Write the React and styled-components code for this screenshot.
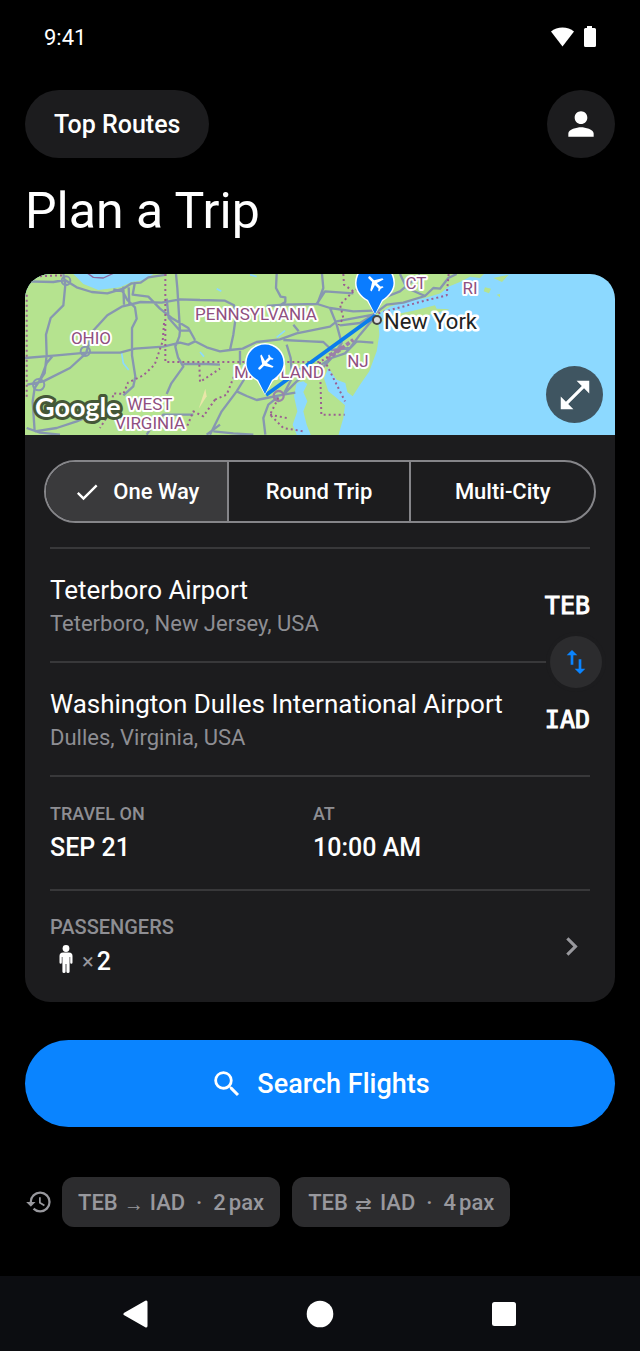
import React, { useState } from 'react';
import styled, { createGlobalStyle } from 'styled-components';
import {
	MdCheck,
	MdChevronRight,
	MdHistory,
	MdOpenInFull,
	MdPerson,
	MdSearch,
	MdSwapVert,
} from 'react-icons/md';

const tripTypes = ['One Way', 'Round Trip', 'Multi-City'];

const recents = [
	{ from: 'TEB', arrow: '→', to: 'IAD', pax: 2 },
	{ from: 'TEB', arrow: '⇄', to: 'IAD', pax: 4 },
];

const roads = [
	'M15 40 L100 42 L135 36 L170 58 L215 72 L262 76 L310 62 L335 46 L362 44 L385 28 L440 20',
	'M130 18 L136 50 L130 112 L92 150 L78 200 L80 262 L74 315 L44 360 L38 400 L44 490',
	'M15 270 L110 262 L200 254 L300 254 L345 242 L430 236 L480 224 L505 230 L525 220 L560 238 L600 250 L630 246 L640 200 L647 150 L642 112 L615 98 L540 96',
	'M630 246 L668 242 L710 222 L780 214 L830 196 L930 176 L950 160 L1060 140',
	'M22 350 L70 340 L150 300 L198 256 L218 190 L262 142 L305 116 L362 102 L425 104 L480 94 L540 96',
	'M280 64 L308 70 L322 96 L345 118 L350 152 L336 180 L336 262 L346 326 L340 355 L310 382',
	'M310 56 L312 110 M326 58 L328 108 M345 42 L338 80 L385 86 L420 122 L455 150 L505 180 L525 216',
	'M440 92 L446 150 L480 188 L478 205 L466 236 L474 268 L490 296 L454 346 L440 378',
	'M468 18 L472 60 L480 188 L508 188',
	'M490 288 L560 288 L600 290 M660 248 L660 290 M800 230 L812 270 L816 330 L790 380',
	'M55 345 L66 322 L80 285 L98 264',
	'M44 490 L110 480 L170 460 L240 430',
	'M20 480 L60 494 L120 500 M380 500 L400 470 L430 440 L520 440 M560 500 L600 470',
	'M570 500 L605 430 L650 370 L680 384 L710 396 L740 390 L790 380 L826 374',
	'M650 370 L675 330 M580 490 L640 496 L700 500',
	'M736 500 L730 450 L745 410 L775 386',
	'M770 18 L768 60 L782 86 L796 88 L796 102 L780 112 M740 114 L790 110 M820 170 L836 190',
	'M906 18 L910 60 L892 108 L930 120 L1000 130 L1060 128',
	'M790 110 L890 108 L915 70 L1000 76',
	'M790 216 L870 220 L910 222 L935 246 L990 240 L1020 200 L1062 150',
	'M940 262 L965 225 L950 170 L930 120',
	'M900 308 L935 270 L975 256 L1010 220 L1060 224',
	'M960 172 L1020 165 L1060 140 L1100 110 L1150 104 L1215 84 L1240 60 L1260 62 L1285 30 L1310 18',
	'M1060 140 L1090 90 L1140 70 L1200 20 M1140 18 L1160 60 L1215 84',
	'M790 380 L830 340 L880 305 L935 270',
];

const borders = [
	'M20 80 L20 390 M15 26 L130 22',
	'M436 18 L436 282 L900 282 L930 262',
	'M432 165 L428 220 L404 290 L370 322 L324 344 L310 378 L280 376 L272 430 L240 480',
	'M538 290 L540 342 L600 302 M585 395 L550 445 L520 430 L495 490',
	'M585 395 L620 380 L640 330 L655 290',
	'M900 282 L904 440 L974 440 M920 290 L940 330 L975 400',
	'M775 390 L750 440 L790 480 L850 490 M750 440 L800 450',
	'M1000 70 L960 110 L970 150 L956 172 M970 18 L972 50 L1000 70 L1050 40',
	'M1075 136 L1140 118 L1215 98 L1280 82 L1286 18',
];

const Pin = ({ x, y, angle }) => (
	<g transform={`translate(${x} ${y})`}>
		<path
			d="M0 0 L-8 -14 C-15 -18 -20 -24 -20 -32 A20 20 0 1 1 20 -32 C20 -24 14 -18 8 -14 Z"
			fill="#fff"
		/>
		<path
			d="M0 -1 L-7 -15 C-14 -19 -18.500 -25 -18.500 -32 A18.500 18.500 0 1 1 18.500 -32 C18.500 -25 13 -19 7 -15 Z"
			fill="#0a7cff"
		/>
		<path
			transform={`translate(0 -32) rotate(${angle}) scale(.9) translate(-11.5 -12)`}
			d="M21 16v-2l-8-5V3.500c0-.83-.67-1.500-1.500-1.500S10 2.670 10 3.500V9l-8 5v2l8-2.500V19l-2 1.500V22l3.500-1 3.500 1v-1.500L13 19v-5.500l8 2.500z"
			fill="#fff"
		/>
	</g>
);

const RouteMap = () => (
	<MapDrawing viewBox="0 0 590 161" preserveAspectRatio="xMidYMid slice" role="img" aria-label="Route map">
		<rect width="590" height="161" fill="#8cd9ff" />
		<g transform="translate(-5 -6) scale(.33333)" fill="none" strokeLinejoin="round">
			<path
				fill="#b5e38f"
				d="M0 0 H1410 L1380 30 L1350 26 L1320 42 L1285 56 L1262 76 L1215 90 L1160 100 L1110 116 L1080 134 L1074 150 L1078 200 L1070 250 L1048 310 L1020 350 L998 385 L982 372 L976 345 L950 335 L925 300 L912 330 L925 370 L950 390 L975 412 L970 450 L950 520 H880 L860 470 L850 430 L862 400 L850 372 L862 348 L850 340 L830 345 L822 385 L832 430 L818 470 L838 520 H0 Z"
			/>
			<path fill="#b5e38f" d="M1080 160 L1120 140 L1180 128 L1245 112 L1250 122 L1290 124 L1200 148 L1110 160 Z" />
			<path fill="#b5e38f" d="M1395 58 l18 4 l-6 14 l-16 -6z M1430 80 l10 -2 v10z M1420 30 l46 -10 l-20 22z" />
			<path fill="#8cd9ff" d="M160 18 L190 48 L235 66 L300 58 L335 42 L375 36 L400 18 Z" />
			<path stroke="#8cd9ff" strokeWidth="5" d="M304 250 L310 286 L326 306 M770 208 L795 188 M540 252 l12 14 M590 62 l14 8 M690 20 l20 6" />
			<path fill="#e9e6a8" d="M556 362 L560 385 L536 422 Z" />
			<path stroke="#8797b0" strokeWidth="7" d={roads.join(' ')} />
			<circle cx="138" cy="38" r="13" stroke="#8797b0" strokeWidth="6" />
			<circle cx="196" cy="250" r="14" stroke="#8797b0" strokeWidth="6" />
			<circle cx="56" cy="350" r="17" stroke="#8797b0" strokeWidth="6" />
			<circle cx="776" cy="384" r="15" stroke="#9a84a8" strokeWidth="7" />
			<path stroke="#9c7fa8" strokeWidth="11" strokeDasharray="12 6" d="M922 275 L960 245 L1000 215 M928 262 L970 236" />
			<path stroke="#9b5f92" strokeWidth="6" strokeDasharray="6 9" d={borders.join(' ')} />
			<path stroke="#8b6aa0" strokeWidth="4" d="M200 14 L220 28 L250 30 L280 16" />
		</g>
		<path d="M241 121 L351 41" stroke="#0a7cec" strokeWidth="4" />
		<StateLabel x="66" y="70">OHIO</StateLabel>
		<StateLabel x="231" y="46">PENNSYLVANIA</StateLabel>
		<StateLabel x="125" y="136">WEST</StateLabel>
		<StateLabel x="125" y="155">VIRGINIA</StateLabel>
		<StateLabel x="254" y="104">MARYLAND</StateLabel>
		<StateLabel x="333" y="93">NJ</StateLabel>
		<StateLabel x="391" y="15">CT</StateLabel>
		<StateLabel x="445" y="20">RI</StateLabel>
		<circle cx="352" cy="46" r="4" fill="#ddd" stroke="#444" strokeWidth="2" />
		<CityLabel x="359" y="55">New York</CityLabel>
		<Pin x={240} y={121} angle={-135} />
		<Pin x={350} y={41} angle={-45} />
		<MapLogo x="10" y="143">Google</MapLogo>
	</MapDrawing>
);

const App = () => {
	const [tripType, setTripType] = useState('One Way');

	return (
		<Screen>
			<GlobalStyle />
			<StatusBar>
				<span>9:41</span>
				<StatusIcons viewBox="0 0 46 22" aria-hidden="true">
					<path d="M1 5.500 C7 0 18 0 24 5.500 L12.500 20.500 Z" />
					<path d="M37 0 h5 v2 h2.500 q1.500 0 1.500 1.500 v16 q0 1.500 -1.500 1.500 h-9 q-1.500 0 -1.500 -1.500 v-16 q0 -1.500 1.500 -1.500 h1.500z" />
				</StatusIcons>
			</StatusBar>
			<Content>
				<Header>
					<RoutesButton>Top Routes</RoutesButton>
					<ProfileButton aria-label="Profile">
						<MdPerson size={38} />
					</ProfileButton>
				</Header>
				<Title>Plan a Trip</Title>
				<Card>
					<MapBox>
						<RouteMap />
						<ExpandButton aria-label="Expand map">
							<MdOpenInFull size={38} />
						</ExpandButton>
					</MapBox>
					<Segments>
						{tripTypes.map((type) => (
							<Segment
								key={type}
								$active={type === tripType}
								aria-pressed={type === tripType}
								onClick={() => setTripType(type)}
							>
								{type === tripType && <MdCheck size={28} />}
								{type}
							</Segment>
						))}
					</Segments>
					<Rows>
						<Row>
							<Airport>
								<AirportName>Teterboro Airport</AirportName>
								<AirportPlace>Teterboro, New Jersey, USA</AirportPlace>
							</Airport>
							<Code>TEB</Code>
						</Row>
						<Row>
							<Airport>
								<AirportName>Washington Dulles International Airport</AirportName>
								<AirportPlace>Dulles, Virginia, USA</AirportPlace>
							</Airport>
							<Code>IAD</Code>
							<SwapButton aria-label="Swap airports">
								<MdSwapVert size={32} />
							</SwapButton>
						</Row>
						<Row>
							<DateGrid>
								<Field>
									<Label>TRAVEL ON</Label>
									<Value>SEP 21</Value>
								</Field>
								<Field>
									<Label>AT</Label>
									<Value>10:00 AM</Value>
								</Field>
							</DateGrid>
						</Row>
						<Row>
							<PassengerButton>
								<Field>
									<Label $large>PASSENGERS</Label>
									<Value>
										<Figure viewBox="0 0 14 28" aria-hidden="true">
											<circle cx="7" cy="3.500" r="3.400" />
											<path d="M4 7.500 H10 Q13.500 7.500 13.500 11 V17.500 Q13.500 18.800 12.300 18.800 Q11.200 18.800 11.200 17.500 V12 H10.600 V26.500 Q10.600 28 9 28 Q7.400 28 7.400 26.500 V19 H6.600 V26.500 Q6.600 28 5 28 Q3.400 28 3.400 26.500 V12 H2.800 V17.500 Q2.800 18.800 1.700 18.800 Q.5 18.800 .5 17.500 V11 Q.5 7.500 4 7.500Z" />
										</Figure>
										<Times>×</Times>2
									</Value>
								</Field>
								<MdChevronRight size={37} />
							</PassengerButton>
						</Row>
					</Rows>
				</Card>
				<SearchButton>
					<MdSearch size={34} />
					Search Flights
				</SearchButton>
				<Recents>
					<MdHistory size={28} />
					<Chips>
						{recents.map(({ from, arrow, to, pax }) => (
							<Chip key={pax}>
								<span>{from}</span>
								<Arrow>{arrow}</Arrow>
								<span>{to}</span>
								<Dot>·</Dot>
								<Pax>
									<span>{pax}</span>
									<span>pax</span>
								</Pax>
							</Chip>
						))}
					</Chips>
				</Recents>
			</Content>
			<NavBar>
				<NavButton aria-label="Back">
					<svg width="28" height="28" viewBox="0 0 28 28">
						<path d="M24 2 V26 L3 14 Z" fill="#fff" stroke="#fff" strokeWidth="3" strokeLinejoin="round" />
					</svg>
				</NavButton>
				<NavButton aria-label="Home">
					<svg width="28" height="28" viewBox="0 0 28 28">
						<circle cx="14" cy="14" r="13.300" fill="#fff" />
					</svg>
				</NavButton>
				<NavButton aria-label="Overview">
					<svg width="28" height="28" viewBox="0 0 28 28">
						<rect x="2" y="2" width="24" height="24" rx="2.500" fill="#fff" />
					</svg>
				</NavButton>
			</NavBar>
		</Screen>
	);
};

export default App;

const GlobalStyle = createGlobalStyle`
	* {
		box-sizing: border-box;
	}
	body {
		margin: 0;
		background: #000;
		color: #fff;
		font-family: Roboto, "Liberation Sans", sans-serif;
	}
	button {
		margin: 0;
		padding: 0;
		border: 0;
		background: none;
		color: inherit;
		font: inherit;
		cursor: pointer;
	}
	svg {
		flex: none;
	}
`;
const Screen = styled.div`
	min-height: 100vh;
	display: flex;
	flex-direction: column;
`;
const StatusBar = styled.div`
	height: 74px;
	padding: 0 44px;
	display: flex;
	align-items: center;
	justify-content: space-between;
	font-size: 22px;
`;
const StatusIcons = styled.svg`
	width: 46px;
	height: 22px;
	fill: #fff;
`;
const Content = styled.main`
	flex: 1;
	padding: 16px 25px 49px;
`;
const Header = styled.header`
	display: flex;
	justify-content: space-between;
`;
const RoutesButton = styled.button`
	height: 68px;
	padding: 0 29px;
	border-radius: 34px;
	background: #1c1c1e;
	font-size: 25px;
	font-weight: 500;
`;
const ProfileButton = styled.button`
	width: 68px;
	height: 68px;
	border-radius: 50%;
	background: #1c1c1e;
	display: flex;
	align-items: center;
	justify-content: center;
`;
const Title = styled.h1`
	margin: 23px 0 33px;
	font-size: 50px;
	font-weight: 400;
	line-height: 60px;
`;
const Card = styled.section`
	border-radius: 25px;
	background: #1c1c1e;
	overflow: hidden;
`;
const MapBox = styled.div`
	position: relative;
	height: 161px;
`;
const MapDrawing = styled.svg`
	display: block;
	width: 100%;
	height: 100%;
`;
const StateLabel = styled.text`
	font-size: 17px;
	text-anchor: middle;
	fill: #8f4f80;
	stroke: #fff;
	stroke-width: 4px;
	stroke-linejoin: round;
	paint-order: stroke;
`;
const CityLabel = styled.text`
	font-size: 22px;
	fill: #222;
	stroke: #fff;
	stroke-width: 5px;
	stroke-linejoin: round;
	paint-order: stroke;
`;
const MapLogo = styled.text`
	font-family: Lato, Roboto, sans-serif;
	font-size: 27px;
	font-weight: 700;
	fill: #fff;
	stroke: #455738;
	stroke-width: 6px;
	stroke-linejoin: round;
	paint-order: stroke;
`;
const ExpandButton = styled.button`
	position: absolute;
	right: 12px;
	bottom: 12px;
	width: 57px;
	height: 57px;
	border-radius: 50%;
	background: #3f5561;
	display: flex;
	align-items: center;
	justify-content: center;
`;
const Segments = styled.div`
	height: 63px;
	margin: 25px 19px 24px;
	border: 2px solid #858589;
	border-radius: 32px;
	display: grid;
	grid-template-columns: repeat(3, 1fr);
	overflow: hidden;
`;
const Segment = styled.button`
	display: flex;
	align-items: center;
	justify-content: center;
	gap: 12px;
	background: ${({ $active }) => ($active ? '#3a3a3c' : 'transparent')};
	font-size: 22px;
	font-weight: 500;
	&:not(:last-child) {
		border-right: 2px solid #858589;
	}
`;
const Rows = styled.div`
	padding: 0 25px;
`;
const Row = styled.div`
	position: relative;
	min-height: 114px;
	border-top: 2px solid #38383a;
	display: flex;
	align-items: center;
	justify-content: space-between;
	&:last-child {
		min-height: 113px;
	}
`;
const Airport = styled.div`
	min-width: 0;
	padding-top: 2px;
	display: flex;
	flex-direction: column;
	gap: 4px;
	white-space: nowrap;
`;
const AirportName = styled.div`
	font-size: 26px;
	line-height: 32px;
`;
const AirportPlace = styled.div`
	color: #8e8e93;
	font-size: 22px;
	line-height: 28px;
`;
const Code = styled.div`
	font-family: "DejaVu Sans Mono", "Liberation Mono", monospace;
	font-size: 25px;
	-webkit-text-stroke: 1px #fff;
`;
const SwapButton = styled.button`
	position: absolute;
	top: -27px;
	right: -12px;
	width: 52px;
	height: 52px;
	border-radius: 50%;
	background: #2c2c2e;
	box-shadow: 0 0 0 4px #1c1c1e;
	color: #0a84ff;
	display: flex;
	align-items: center;
	justify-content: center;
`;
const DateGrid = styled.div`
	flex: 1;
	padding-right: 14px;
	display: grid;
	grid-template-columns: 1fr 1fr;
`;
const Field = styled.div`
	display: flex;
	flex-direction: column;
	gap: 6px;
`;
const Label = styled.div`
	color: #8e8e93;
	font-size: ${({ $large }) => ($large ? '20px' : '18px')};
	font-weight: 500;
	line-height: 24px;
`;
const Value = styled.div`
	display: flex;
	align-items: center;
	font-size: 25px;
	font-weight: 500;
	line-height: 32px;
`;
const PassengerButton = styled.button`
	flex: 1;
	display: flex;
	align-items: center;
	justify-content: space-between;
	text-align: left;
	> svg {
		color: #98989d;
	}
`;
const Figure = styled.svg`
	width: 14px;
	height: 28px;
	margin: 0 9px 6px;
	fill: #fff;
`;
const Times = styled.span`
	margin-right: 3px;
	color: #98989d;
	font-size: 22px;
	font-weight: 400;
`;
const SearchButton = styled.button`
	width: 100%;
	height: 87px;
	margin: 38px 0 50px;
	border-radius: 44px;
	background: #0a84ff;
	display: flex;
	align-items: center;
	justify-content: center;
	gap: 13px;
	font-size: 27px;
	font-weight: 500;
`;
const Recents = styled.div`
	display: flex;
	align-items: center;
	gap: 9px;
	color: #98989d;
`;
const Chips = styled.div`
	display: flex;
	flex-wrap: wrap;
	gap: 12px;
`;
const Chip = styled.button`
	height: 50px;
	padding: 0 16px;
	border-radius: 12px;
	background: #2c2c2e;
	display: flex;
	align-items: center;
	font-size: 22px;
	font-weight: 500;
`;
const Arrow = styled.span`
	width: 32px;
	padding-top: 4px;
	text-align: center;
	font-size: 20px;
	font-weight: 400;
`;
const Dot = styled.span`
	margin: 0 11px;
`;
const Pax = styled.span`
	display: flex;
	gap: 3px;
`;
const NavBar = styled.nav`
	height: 75px;
	padding: 0 44px;
	background: #0c0d11;
	display: grid;
	grid-template-columns: repeat(3, 1fr);
`;
const NavButton = styled.button`
	display: flex;
	align-items: center;
	justify-content: center;
`;
